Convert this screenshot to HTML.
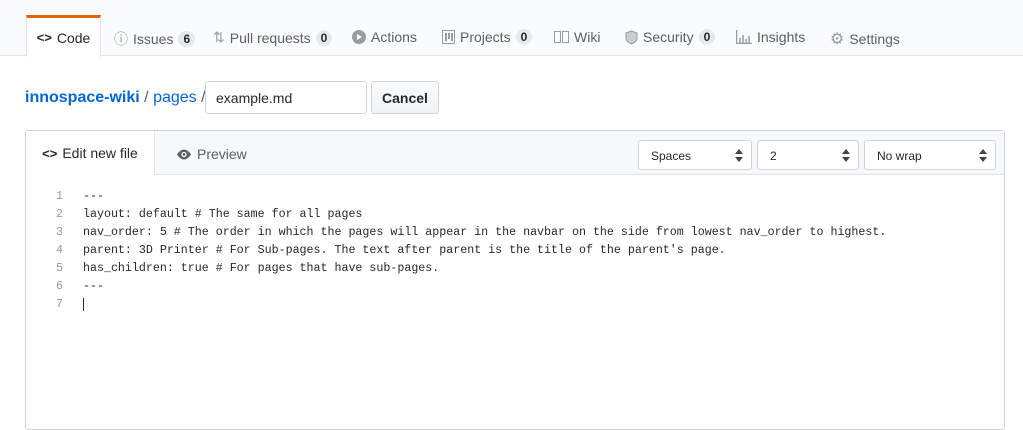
<!DOCTYPE html>
<html><head><style>
*{box-sizing:border-box;margin:0;padding:0}
body{width:1023px;height:421px;overflow:hidden;background:#fff;font-family:"Liberation Sans",sans-serif;font-size:14px;color:#24292e;position:relative}
.nav{position:absolute;left:0;top:0;width:1023px;height:56px;background:#fafbfc;border-bottom:1px solid #e1e4e8}
.tab{position:absolute;top:29px;color:#586069;font-size:14px;white-space:nowrap;display:flex;align-items:center;gap:5px}
.cnt{display:inline-block;background:#e6e8eb;border-radius:10px;font-size:12px;font-weight:bold;padding:1px 5px;color:#24292e;line-height:14px}
.code{position:absolute;left:26px;top:15px;width:75px;height:42px;background:#fff;border:1px solid #e1e4e8;border-top:3px solid #e36209;border-bottom:none;color:#24292e;display:flex;align-items:center;justify-content:center;gap:5px}
a{color:#0366d6;text-decoration:none}
.crumb{position:absolute;left:25px;top:89px;font-size:16px}
.input{position:absolute;left:205px;top:81px;width:162px;height:33px;border:1px solid #d1d5da;border-radius:3px;padding:8px 10px;font-size:14px}
.btn{position:absolute;left:371px;top:81px;width:68px;height:33px;border:1px solid #d1d5da;border-radius:3px;background:linear-gradient(#fafbfc,#eff3f6);font-weight:bold;font-size:14px;text-align:center;line-height:33px}
.box{position:absolute;left:25px;top:130px;width:980px;height:300px;border:1px solid #d1d5da;border-radius:3px}
.hdr{height:44px;background:#f6f8fa;border-bottom:1px solid #e1e4e8;position:relative}
.etab{position:absolute;left:0;top:0;width:129px;height:44px;background:#fff;border-right:1px solid #e1e4e8;display:flex;align-items:center;justify-content:center;gap:5px;font-size:14px}
.ptab{position:absolute;left:150px;top:15px;color:#586069;display:flex;align-items:center;gap:5px}
.sel{position:absolute;top:9px;height:30px;border:1px solid #d1d5da;border-radius:3px;background:#fff;font-size:12px;padding:8px 12px;line-height:14px}
.sel:after{content:"";position:absolute;right:8px;top:8px;border-left:4px solid transparent;border-right:4px solid transparent;border-bottom:5px solid #444}
.sel:before{content:"";position:absolute;right:8px;top:16px;border-left:4px solid transparent;border-right:4px solid transparent;border-top:5px solid #444}
pre{position:absolute;left:0;top:57px;font-family:"Liberation Mono",monospace;font-size:11.65px;line-height:18px;color:#24292e}
.ln{position:absolute;left:30px;top:57px;font-family:"Liberation Mono",monospace;font-size:11.65px;line-height:18px;color:#999;text-align:right}
</style></head><body>
<div class="nav">
<div class="code"><b style="font-size:13px">&lt;&gt;</b> Code</div>
<div class="tab" style="left:114px"><span style="font-size:14px;color:#959da5">ⓘ</span>Issues <span class="cnt">6</span></div>
<div class="tab" style="left:213px"><span style="color:#959da5">⇅</span>Pull requests <span class="cnt">0</span></div>
<div class="tab" style="left:352px"><svg width="14" height="14"><circle cx="7" cy="7" r="7" fill="#959da5"/><path d="M5 4l5 3-5 3z" fill="#fff"/></svg>Actions</div>
<div class="tab" style="left:442px"><svg width="13" height="14"><rect x="0.5" y="0.5" width="12" height="13" fill="none" stroke="#959da5"/><rect x="3" y="3" width="2" height="8" fill="#959da5"/><rect x="6" y="3" width="2" height="6" fill="#959da5"/><rect x="9" y="3" width="2" height="8" fill="#959da5"/></svg>Projects <span class="cnt">0</span></div>
<div class="tab" style="left:554px"><svg width="15" height="12"><rect x="0.5" y="0.5" width="6" height="11" fill="none" stroke="#959da5"/><rect x="8.5" y="0.5" width="6" height="11" fill="none" stroke="#959da5"/></svg>Wiki</div>
<div class="tab" style="left:625px"><svg width="13" height="15"><path d="M6.5 1L1 3v5c0 3 3 5 5.5 6 2.5-1 5.5-3 5.5-6V3z" fill="#ccc" stroke="#959da5"/></svg>Security <span class="cnt">0</span></div>
<div class="tab" style="left:736px"><svg width="16" height="14"><path d="M0.5 0v13.5H16M4 13V8M7 13V5M10 13V9M13 13V6" stroke="#959da5" fill="none" stroke-width="1.5"/></svg>Insights</div>
<div class="tab" style="left:830px"><span style="color:#959da5;font-size:16px">⚙</span>Settings</div>
</div>
<div class="crumb"><a href="#" style="font-weight:bold">innospace-wiki</a> <span style="color:#586069">/</span> <a href="#">pages</a> <span style="color:#586069">/</span></div>
<div class="input">example.md</div>
<div class="btn">Cancel</div>
<div class="box">
<div class="hdr">
<div class="etab"><b style="font-size:13px">&lt;&gt;</b> Edit new file</div>
<div class="ptab"><svg width="16" height="11"><path d="M8 0.5C4 0.5 1 5.5 1 5.5S4 10.5 8 10.5 15 5.5 15 5.5 12 0.5 8 0.5z" fill="#586069"/><circle cx="8" cy="5.5" r="2.6" fill="#fff"/><circle cx="8" cy="5.5" r="1.4" fill="#586069"/></svg>Preview</div>
<div class="sel" style="left:612px;width:114px">Spaces</div>
<div class="sel" style="left:731px;width:102px">2</div>
<div class="sel" style="left:838px;width:132px">No wrap</div>
</div>
<div class="ln">1<br>2<br>3<br>4<br>5<br>6<br>7</div>
<pre style="left:57px">---
layout: default # The same for all pages
nav_order: 5 # The order in which the pages will appear in the navbar on the side from lowest nav_order to highest.
parent: 3D Printer # For Sub-pages. The text after parent is the title of the parent's page.
has_children: true # For pages that have sub-pages.
---
<span style="border-left:1px solid #24292e"> </span></pre>
</div>
</body></html>
